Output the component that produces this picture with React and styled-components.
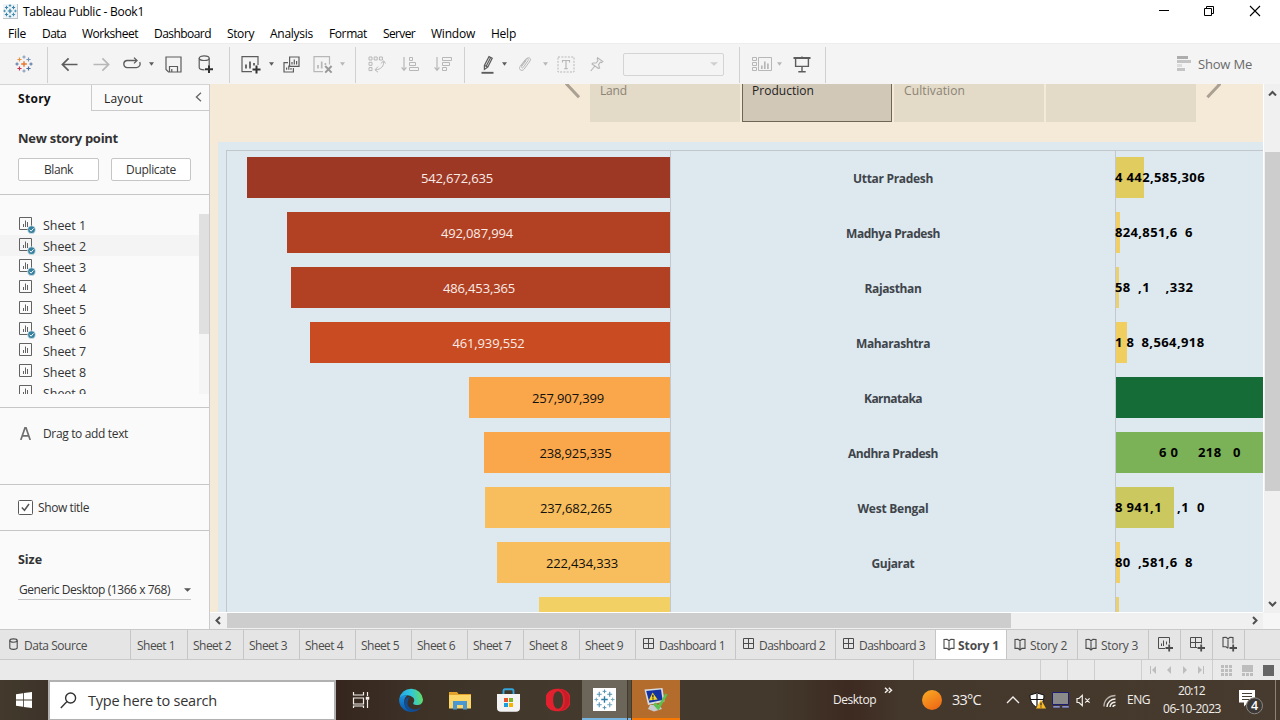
import React, { useLayoutEffect, useRef, useState } from "react";
import styled, { createGlobalStyle } from "styled-components";

const Global = createGlobalStyle`
  *, *::before, *::after { box-sizing: border-box; }
  html, body { margin: 0; padding: 0; overflow: hidden; }
  body { font-family: "Open Sans", "Noto Sans", sans-serif; font-size: 12px; color: #1a1a1a; }
  svg { display: block; flex: none; }
`;

/* ---------- text whose tracking is fitted to a given width ---------- */
const FitBox = styled.span`
  display: block;
  flex: none;
  white-space: nowrap;
  width: ${(p) => p.$w}px;
  font-size: ${(p) => p.$size || 12}px;
  font-weight: ${(p) => p.$weight || 400};
  color: ${(p) => p.$color || "inherit"};
  line-height: 16px;
`;
function Fit({ w, size, weight, color, children, className }) {
  const ref = useRef(null);
  const [tracking, setTracking] = useState(0);
  useLayoutEffect(() => {
    const natural = ref.current.getBoundingClientRect().width;
    setTracking((w - natural) / String(children).length);
  }, [w, children]);
  return (
    <FitBox className={className} $w={w} $size={size} $weight={weight} $color={color}>
      <span ref={ref} style={{ letterSpacing: tracking }}>{children}</span>
    </FitBox>
  );
}

/* ---------- window frame ---------- */
const Window = styled.div`
  width: 1280px;
  height: 720px;
  display: flex;
  flex-direction: column;
  background: #fff;
  overflow: hidden;
`;
const TitleBar = styled.header`
  height: 24px;
  flex: none;
  display: flex;
  align-items: center;
  padding-left: 3px;
`;
const AppMark = styled.div`
  width: 15px;
  height: 15px;
  margin-top: -1px;
  background: #eef4f7;
  border-right: 1px solid #b9c3c8;
  border-bottom: 1px solid #b9c3c8;
`;
const Caption = styled(Fit)`margin-left: 5px;`;
const WindowButtons = styled.div`
  margin: -3px 19px 0 auto;
  display: flex;
  gap: 34px;
`;
const MenuBar = styled.nav`
  height: 19px;
  flex: none;
  display: flex;
  gap: 16px;
  padding: 2px 0 0 8px;
  color: #000;
`;
const Toolbar = styled.div`
  height: 41px;
  flex: none;
  display: flex;
  align-items: center;
  background: #f4f4f4;
  border-top: 1px solid #ededed;
`;
const Tool = styled.div`
  flex: none;
  width: ${(p) => p.$w}px;
  display: flex;
  justify-content: center;
  color: ${(p) => (p.$off ? "#b7b7b7" : "#5c5c5c")};
`;
const PenTools = styled.div`
  flex: none;
  width: 84px;
  padding-left: 16px;
  display: flex;
  align-items: center;
  color: #5c5c5c;
`;
const PenMenu = styled.div`
  display: flex;
  align-items: center;
  gap: 11px;
  margin-left: 8px;
`;
const DimTool = styled.div`color: #b7b7b7;`;
const CardTools = styled.div`
  flex: none;
  width: 41px;
  padding-left: 12px;
  display: flex;
  align-items: center;
  gap: 5px;
  color: #b7b7b7;
`;
const Rule = styled.div`
  flex: none;
  width: 1px;
  height: 36px;
  margin-top: 2px;
  margin-left: ${(p) => p.$before || 0}px;
  background: #d0d0d0;
`;
const Combo = styled.div`
  flex: none;
  width: 101px;
  height: 23px;
  margin-left: 13px;
  margin-right: 15px;
  border: 1px solid #d4d4d4;
  border-radius: 2px;
  display: flex;
  align-items: center;
  justify-content: flex-end;
  padding-right: 5px;
  color: #cfcfcf;
`;
const ShowMe = styled.div`
  margin: 0 28px 0 auto;
  display: flex;
  align-items: center;
  gap: 6px;
`;
const Workspace = styled.div`
  height: 545px;
  flex: none;
  display: flex;
`;

/* ---------- side pane ---------- */
const Side = styled.aside`
  width: 210px;
  flex: none;
  background: #fafafa;
  border-top: 1px solid #d4d4d4;
  border-right: 1px solid #cbcbcb;
  display: flex;
  flex-direction: column;
`;
const SideTabs = styled.div`
  height: 26px;
  flex: none;
  display: flex;
`;
const SideTab = styled.div`
  display: flex;
  align-items: center;
  ${(p) =>
    p.$active
      ? "width: 91px; padding-left: 18px; padding-top: 2px;"
      : "flex: 1; padding-left: 12px; padding-right: 7px; justify-content: space-between; border-left: 1px solid #cbcbcb; border-bottom: 1px solid #cbcbcb; padding-top: 2px;"}
`;
const CollapseMark = styled.svg`margin-top: -4px;`;
const Section = styled.section`
  height: ${(p) => p.$h}px;
  flex: none;
  padding: ${(p) => p.$pad || "0"};
  border-bottom: ${(p) => (p.$last ? "0" : "1px solid #c6c6c6")};
`;
const ButtonRow = styled.div`
  display: flex;
  gap: 12px;
  margin-top: 12px;
`;
const PlainButton = styled.div`
  width: ${(p) => p.$w}px;
  height: 23px;
  border: 1px solid #c6c6c6;
  border-radius: 2px;
  background: #fff;
  display: flex;
  justify-content: center;
  align-items: center;
  padding-top: 1px;
`;
const SheetList = styled.div`
  height: 180px;
  display: flex;
  overflow: hidden;
`;
const SheetRows = styled.div`flex: 1;`;
const SheetRow = styled.div`
  height: 21px;
  display: flex;
  align-items: center;
  padding: 2px 0 0 19px;
  gap: 7px;
  background: ${(p) => (p.$hover ? "#f4f4f4" : "transparent")};
`;
const ListTrack = styled.div`
  width: 10px;
  background: #f5f5f5;
`;
const ListThumb = styled.div`
  height: 120px;
  background: #e0e0e0;
`;
const SideLine = styled.div`
  display: flex;
  align-items: center;
  gap: ${(p) => p.$gap}px;
`;
const LowText = styled(Fit)`margin-top: 1px;`;
const SizeSelect = styled.div`
  width: 173px;
  height: 19px;
  margin-top: 13px;
  padding: 0 0 1px 1px;
  display: flex;
  align-items: center;
  justify-content: space-between;
  border-bottom: 1px solid #c6c6c6;
  color: #555;
`;

/* ---------- story canvas ---------- */
const Canvas = styled.main`
  flex: 1;
  display: grid;
  grid-template-columns: 1053px 17px;
  grid-template-rows: 528px 17px;
`;
const View = styled.div`
  background: #f5e9d8;
  overflow: hidden;
  display: flex;
  flex-direction: column;
`;
const Points = styled.div`
  height: 58px;
  flex: none;
  display: flex;
  align-items: flex-start;
  padding-left: 355px;
`;
const Point = styled.div`
  width: 150px;
  height: 38px;
  margin-right: 2px;
  padding: 0 0 0 10px;
  background: ${(p) => (p.$active ? "#d2c8b8" : "#e3dac8")};
  ${(p) => p.$active && "border: 1px solid #6f6658; border-top: 0; padding-left: 9px;"}
`;
const PointText = styled(Fit)`line-height: 13px;`;
const ArrowLeft = styled.svg`margin-right: 9px;`;
const ArrowRight = styled.svg`margin-left: 7px;`;
const Board = styled.div`
  flex: 1;
  margin-left: 8px;
  padding: 8px 0 0 8px;
  background: #dde9ef;
`;
const Chart = styled.div`
  height: 463px;
  display: flex;
  border-left: 1px solid #c2c7cc;
  border-top: 1px solid #c2c7cc;
`;
const Pane = styled.div`
  flex: none;
  width: ${(p) => p.$w}px;
  border-right: ${(p) => (p.$open ? "0" : "1px solid #c4c7cb")};
`;
const Mark = styled.div`
  height: 55px;
  padding-top: 6px;
  display: flex;
  justify-content: ${(p) => p.$align};
`;
const Bar = styled.div`
  height: 41px;
  width: ${(p) => p.$w}px;
  background: ${(p) => p.$fill};
  color: ${(p) => (p.$light ? "#f8ece8" : "#111")};
  display: flex;
  align-items: center;
  justify-content: center;
  padding-right: 3px;
`;
const StateCell = styled.div`
  height: 55px;
  display: flex;
  justify-content: center;
  padding-top: 20px;
`;
const ThinBar = styled.div`
  position: relative;
  height: 41px;
  width: ${(p) => p.$w}px;
  background: ${(p) => p.$fill};
`;
const MarkLabel = styled.div`
  position: absolute;
  left: 0;
  top: 12px;
  display: flex;
  margin-left: ${(p) => p.$start}px;
  color: #000;
`;
const LabelSlot = styled.div`
  flex: none;
  width: ${(p) => p.$w}px;
`;
const VScroll = styled.div`
  background: #f0f0f0;
  border-left: 1px solid #fff;
  display: flex;
  flex-direction: column;
  align-items: center;
  padding: 6px 0 5px;
`;
const VThumb = styled.div`
  width: 15px;
  height: 339px;
  margin-top: 56px;
  margin-bottom: auto;
  background: #cdcdcd;
`;
const HScroll = styled.div`
  background: #f0f0f0;
  border-top: 1px solid #fff;
  display: flex;
  align-items: flex-start;
  padding: 0 4px;
  svg { margin-top: 3px; }
`;
const HThumb = styled.div`
  width: 784px;
  height: 15px;
  margin-left: 4px;
  margin-right: auto;
  background: #cdcdcd;
`;
const Corner = styled.div`
  background: #f6f6f6;
  border-top: 1px solid #f0f0f0;
`;

/* ---------- sheet tabs and status ---------- */
const Tabs = styled.div`
  height: 31px;
  flex: none;
  display: flex;
  background: #e5e5e5;
  border-top: 1px solid #c9c9c9;
  border-bottom: 1px solid #c9c9c9;
`;
const Tab = styled.div`
  flex: none;
  width: ${(p) => p.$w}px;
  padding-left: ${(p) => p.$pad}px;
  border-right: 1px solid #c6c6c6;
  background: ${(p) => (p.$active ? "#fff" : "transparent")};
  color: #4c4c4c;
  display: flex;
  align-items: center;
  gap: ${(p) => p.$gap || 4}px;
  padding-top: 2px;
  svg { margin-top: -3px; }
`;
const Status = styled.div`
  height: 20px;
  flex: none;
  display: flex;
  justify-content: flex-end;
  background: #eaeaea;
`;
const StatusCell = styled.div`
  width: ${(p) => p.$w}px;
  border-left: 1px solid #cecece;
  display: flex;
  align-items: center;
  padding-left: ${(p) => p.$pad || 0}px;
  gap: ${(p) => p.$gap || 0}px;
`;

/* ---------- taskbar ---------- */
const Taskbar = styled.footer`
  height: 40px;
  flex: none;
  display: flex;
  align-items: center;
  color: #f2efec;
  background: linear-gradient(90deg, #433a2d 0, #3d3329 48px, #35251e 336px, #3e3227 420px, #433a2d 560px, #433a2d 770px, #3d2a21 850px, #44372b 900px, #463b2e 1280px);
`;
const Start = styled.div`
  width: 48px;
  display: flex;
  justify-content: center;
`;
const Search = styled.div`
  width: 288px;
  height: 40px;
  background: #fff;
  border: 2px solid #b1b1b1;
  border-bottom-width: 1px;
  display: flex;
  align-items: center;
  padding-left: 10px;
  gap: 11px;
  color: #333;
`;
const AppSlot = styled.div`
  flex: none;
  width: ${(p) => p.$w}px;
  height: 40px;
  display: flex;
  align-items: center;
  justify-content: center;
  background: ${(p) => p.$bg || "transparent"};
  border-bottom: ${(p) => (p.$line ? `2px solid ${p.$line}` : "0")};
`;
const Stack = styled.div`
  width: 3px;
  height: 40px;
  margin: 0 1px 0 1px;
  background: #57503f;
  border-bottom: 2px solid #76b4e2;
`;
const Tray = styled.div`
  flex: 1;
  height: 40px;
  display: flex;
  align-items: center;
  padding-left: 153px;
`;
const TrayItem = styled.div`
  flex: none;
  width: ${(p) => p.$w}px;
  margin-top: ${(p) => p.$dy || 0}px;
`;
const Clock = styled.div`
  width: 76px;
  display: flex;
  flex-direction: column;
  align-items: flex-start;
  gap: 2px;
`;
const ClockTime = styled(Fit)`margin-left: 15px;`;
const Peek = styled.div`
  width: 1px;
  height: 40px;
  background: #8b8378;
`;

/* ---------- icons ---------- */
const Plus = ({ x, y, r, c, s = 1.2 }) => (
  <path d={`M${x - r} ${y}H${x + r}M${x} ${y - r}V${y + r}`} stroke={c} strokeWidth={s} fill="none" />
);
const Sparkle = ({ size = 17, colors, s = 1.2 }) => {
  const [a, b, c, d, e] = colors;
  return (
    <svg width={size} height={size} viewBox="0 0 18 18">
      <Plus x={9} y={9} r={2.8} c={a} s={s + 0.2} />
      <Plus x={9} y={2} r={1.6} c={b} s={s - 0.2} />
      <Plus x={9} y={16} r={1.6} c={b} s={s - 0.2} />
      <Plus x={2} y={9} r={1.6} c={c} s={s - 0.2} />
      <Plus x={16} y={9} r={1.6} c={c} s={s - 0.2} />
      <Plus x={4.5} y={4.5} r={2.1} c={d} s={s} />
      <Plus x={13.5} y={4.5} r={2.1} c={b} s={s} />
      <Plus x={4.5} y={13.5} r={2.1} c={e} s={s} />
      <Plus x={13.5} y={13.5} r={2.1} c={c} s={s} />
    </svg>
  );
};
const blues = ["#2f7da5", "#3d86ab", "#4a90b3", "#3d86ab", "#3d86ab"];
const Svg = ({ w, h, children, sw = 1.2 }) => (
  <svg width={w} height={h} viewBox={`0 0 ${w} ${h}`} fill="none" stroke="currentColor" strokeWidth={sw}>
    {children}
  </svg>
);
const Caret = ({ w = 5 }) => (
  <svg width={w} height={4} viewBox="0 0 6 4" preserveAspectRatio="none" fill="currentColor"><path d="M0 0.3H6L3 3.7Z" /></svg>
);
const BackIcon = () => <Svg w={17} h={15} sw={1.7}><path d="M16.5 7.5H1.6M7.6 1.3L1.4 7.5L7.6 13.7" /></Svg>;
const ForwardIcon = () => <Svg w={17} h={15} sw={1.7}><path d="M.5 7.5H15.4M9.4 1.3L15.6 7.5L9.4 13.7" /></Svg>;
const LoopIcon = () => (
  <Svg w={19} h={14} sw={1.3}><path d="M14 3.5H4.8A3.6 3.6 0 0 0 4.8 10.6H14.5A3.6 3.6 0 0 0 17.6 5.2" /><path d="M12 .6L15 3.5L12 6.4" /></Svg>
);
const SaveIcon = () => (
  <Svg w={17} h={17}><path d="M1 1H16V16H3.5L1 13.5Z" /><path d="M4.5 16V10.5H12.5V16M6.8 16V13" /></Svg>
);
const DbPlusIcon = () => (
  <Svg w={16} h={18}>
    <ellipse cx="6.2" cy="3.2" rx="5" ry="2.3" /><path d="M1.2 3.2V12.5C1.2 14 3.4 14.8 6.5 14.8M11.2 3.2V10" />
    <path d="M7 14.2H15M11 10.2V18" strokeWidth="2" stroke="#333" />
  </Svg>
);
const ChartPlusIcon = () => (
  <Svg w={20} h={19}>
    <path d="M17 10V1.6H1V16.6H11" /><path d="M5 13.5V9.5M9 13.5V6.5M13 10.5V8" strokeWidth="1.8" />
    <path d="M11.5 14.5H19.5M15.5 10.5V18.5" strokeWidth="2" stroke="#333" />
  </Svg>
);
const DuplicateIcon = () => (
  <Svg w={17} h={17}>
    <path d="M6.6 1H16V10.4H6.6ZM5 6.6H1V16H10.4V12" /><path d="M9 8.6V6M11.3 8.6V3.5M13.6 8.6V5M3.6 13.8V11.5M5.8 13.8V9.5M8 13.8V12" />
  </Svg>
);
const ChartClearIcon = () => (
  <Svg w={20} h={19}>
    <path d="M16.5 9.5V1.6H1V16.6H10" /><path d="M5 13.5V10M8.7 13.5V6.5M12.4 10V8" strokeWidth="1.7" />
    <path d="M12.2 11L18.6 17.6M18.6 11L12.2 17.6" strokeWidth="2" stroke="#999" />
  </Svg>
);
const SwapIcon = () => (
  <Svg w={18} h={18} sw={1}>
    <path d="M1 2H4V5H1ZM6.2 2H9.2V5H6.2ZM11.4 2H14.4V5H11.4ZM1 7.3H4V10.3H1ZM1 12.6H4V15.6H1Z" />
    <path d="M15.7 6.5C16 11 13 14.5 7.5 14.8M12.8 8.5L15.7 5.8L17.6 8.5M10 11.6L7 14.8L10 17.2" />
  </Svg>
);
const SortUpIcon = () => (
  <Svg w={18} h={16}><path d="M3 1V14M.6 11.4L3 14.4L5.4 11.4" /><path d="M8.5 1.5H11.5V4.5H8.5ZM8.5 6.5H14.5V9.5H8.5ZM8.5 11.5H17.5V14.5H8.5Z" strokeWidth="1" /></Svg>
);
const SortDownIcon = () => (
  <Svg w={18} h={16}><path d="M3 1V14M.6 11.4L3 14.4L5.4 11.4" /><path d="M8.5 1.5H17.5V4.5H8.5ZM8.5 6.5H15.5V9.5H8.5ZM8.5 11.5H12.5V14.5H8.5Z" strokeWidth="1" /></Svg>
);
const PenIcon = () => (
  <Svg w={13} h={19} sw={1.2}><path d="M8 1.6L11.2 3.2L6.8 12L3.4 14.4L3.4 10.4ZM3.4 10.4L6.8 12M9.4 3L5.4 10.8" /><path d="M.5 17.8H12.5" strokeWidth="1.9" /></Svg>
);
const ClipIcon = () => (
  <Svg w={14} h={16} sw={1}><path d="M3 10L8.5 3C10.4 .6 13.6 2 12 5L6.2 13C4 16 .2 13.6 2 10.6L7.5 3.4C9 1.4 11 2.6 10 4.6L5.3 11.4C4.4 12.6 3 11.6 3.8 10.2L8.2 4.6" /></Svg>
);
const TextIcon = () => (
  <Svg w={18} h={17} sw={1}><rect x="1" y="1" width="16" height="15" strokeDasharray="2 1.3" /><path d="M5.5 6.5V4.5H12.5V6.5M9 4.5V12.5M7.3 12.6H10.7" strokeWidth="1.2" /></Svg>
);
const PinIcon = () => (
  <Svg w={14} h={15} sw={1.1}><path d="M7.5 .8L12.8 4.6L11.4 5.6L10.3 5.2L8.6 7.7L9.6 11L8.2 11.3L2 7L3 6L6.2 6L8 3.6L7.2 2.2ZM4.8 9L.8 14" /></Svg>
);
const CardsIcon = () => (
  <Svg w={20} h={15} sw={1}><path d="M.5 .5H4.5V3.5H.5ZM.5 5.5H4.5V8.5H.5ZM.5 10.5H4.5V13.5H.5ZM6.5 .5H19.5V13.5H6.5Z" /><path d="M9.8 12V8.6M12.8 12V4.6M15.9 12V6.6" strokeWidth="1.7" /></Svg>
);
const PresentIcon = () => (
  <Svg w={18} h={17} sw={1.4}><path d="M2.6 2V10.4H15.4V2M9 10.4V15.6M5.3 15.8H12.7M9 .5V2" /><path d="M.5 2H17.5" strokeWidth="2" /></Svg>
);
const ShowMeIcon = () => (
  <svg width="15" height="16" viewBox="0 0 15 16" fill="#c4c4c4"><path d="M0 0H11V3H0Z" fill="#adadad" /><path d="M0 4H14V7H0ZM0 12H8V15H0Z" /><path d="M0 8H5V11H0Z" fill="#dcdcdc" /></svg>
);
const SheetIcon = ({ used }) => (
  <svg width="17" height="17" viewBox="0 0 17 17" fill="none" stroke="#626262">
    <path d="M.5 .5H12.5V12.5H.5Z" /><path d="M4.5 10V7M6.5 10V3.5M8.5 10V5" />
    {used && <g><circle cx="12.5" cy="12.7" r="3.9" fill="#36809f" stroke="#fafafa" strokeWidth=".6" /><path d="M10.6 12.7L12.1 14.2L14.5 11.4" stroke="#fff" /></g>}
  </svg>
);
const Chevron = ({ d, w = 9, h = 9, c = "#505050" }) => (
  <svg width={w} height={h} viewBox={`0 0 ${w} ${h}`} fill="none" stroke={c} strokeWidth="2"><path d={d} /></svg>
);
const GridIcon = () => <Svg w={12} h={12} sw={1}><path d="M.5 .5H10.5V10.5H.5ZM5.5 .5V10.5M.5 5.5H10.5" /></Svg>;
const BookIcon = () => <Svg w={12} h={13} sw={1.1}><path d="M1 1.5L4 1.2L6 2.8L8 1.2L11 1.5V10.4H8L6 12L4 10.4H1ZM6 2.8V12" /></Svg>;
const CylinderIcon = () => <Svg w={9} h={12} sw={1.1}><ellipse cx="4.5" cy="2.6" rx="3.7" ry="1.7" /><path d="M.8 2.6V9.8C.8 11.9 8.2 11.9 8.2 9.8V2.6" /></Svg>;
const addMark = <path d="M7.5 12H15M11.2 8.4V15.6" strokeWidth="1.8" />;
const AddSheetIcon = () => <Svg w={15} h={17} sw={1}><path d="M11.5 7.5V1.5H.5V12.5H7M3.5 10V7.5M5.5 10V4.5M8.5 8.5V5.5" />{addMark}</Svg>;
const AddBoardIcon = () => <Svg w={15} h={17} sw={1}><path d="M11.5 7.5V1.5H.5V11.5H7M5.5 1.5V11.5M.5 6.5H11.5" />{addMark}</Svg>;
const AddStoryIcon = () => <Svg w={15} h={17} sw={1.1}><path d="M11 7.5V1.6L8 1.3L6 2.8L4 1.3L1 1.6V10.8H4L6 12.3M6 2.8V12.3" />{addMark}</Svg>;

const EdgeIcon = () => (
  <svg width="24" height="24" viewBox="0 0 24 24">
    <defs>
      <linearGradient id="eg" x1="0" x2="1" y1=".4" y2=".3"><stop offset="0" stopColor="#22a5e4" /><stop offset=".5" stopColor="#2fc6dc" /><stop offset="1" stopColor="#67dd5b" /></linearGradient>
      <linearGradient id="eb" x1="0" x2="0" y1="0" y2="1"><stop offset="0" stopColor="#1b93de" /><stop offset="1" stopColor="#0b56a8" /></linearGradient>
    </defs>
    <path d="M.2 11A12 12 0 0 1 24 11.4C24 15.5 20.7 17.3 17.4 17.1C14.6 17 13.7 15.7 14.5 14.5C16.7 11.4 14 7.9 9.5 7.4C5.5 7 1.5 9 .2 11Z" fill="url(#eg)" />
    <path d="M.1 12C.3 8.5 4.5 6.6 8.5 7.3C6 9 4.5 12.5 5.5 16C6.6 20 10 23 14.5 23.7A12 12 0 0 1 .1 12Z" fill="url(#eb)" />
    <path d="M9.3 12.5C7.3 16 9.5 20.3 13.8 21.2C17 22 20 20.8 22.2 18.4C20.5 22 16.5 24.2 12.3 24C6.5 22 4.4 17.5 5.7 13C6.3 10.5 8.5 8.7 11 9C9.5 10 9 11.5 9.3 12.5Z" fill="#124c91" />
  </svg>
);
const FolderIcon = () => (
  <svg width="22" height="19" viewBox="0 0 22 19"><path d="M0 1H8L9.5 3H22V17H0Z" fill="#e4a22b" /><path d="M0 4H22V17.5H0Z" fill="#fcd669" /><path d="M4 18.6V10H18V18.6H14V14H8V18.6Z" fill="#4a98cf" /></svg>
);
const StoreIcon = () => (
  <svg width="23" height="24" viewBox="0 0 23 24"><path d="M6.5 6V3Q6.5 1.3 8 1.3H15Q16.5 1.3 16.5 3V6" fill="none" stroke="#34a5dd" strokeWidth="1.9" /><path d="M0 6H23V20Q23 23.8 19 23.8H4Q0 23.8 0 20Z" fill="#f3f3f3" /><path d="M7 10H11V14H7Z" fill="#e9532b" /><path d="M12 10H16V14H12Z" fill="#7db42c" /><path d="M7 15H11V19H7Z" fill="#1c9de0" /><path d="M12 15H16V19H12Z" fill="#f6b400" /></svg>
);
const OperaIcon = () => (
  <svg width="24" height="24" viewBox="0 0 24 24"><path fillRule="evenodd" fill="#e3202d" d="M12 .8A11.4 11.3 0 1 0 12 23.2A11.4 11.3 0 1 0 12 .8ZM12 3.2C15 3.2 17 7 17 12S15 20.8 12 20.8S7.2 17 7.2 12S9 3.2 12 3.2Z" /><path d="M12 .8C16 .8 23.4 4 23.4 12S16 23.2 12 23.2C17.5 22 19 17 19 12S17 2.5 12 .8Z" fill="#b31724" opacity=".55" /></svg>
);
const TableauTile = styled.div`
  width: 23px;
  height: 23px;
  display: flex;
  align-items: center;
  justify-content: center;
  background: #fff;
`;
const MonitorCheckIcon = () => (
  <svg width="24" height="25" viewBox="0 0 24 25"><path d="M6 18H15L18 22L10 24.5L4 22Z" fill="#c7cbd0" /><path d="M.5 2.5L18.5 1L20.5 14.5L4 18Z" fill="#d8dce0" /><path d="M2.2 4L17 2.6L18.6 13L5.4 15.8Z" fill="#1532a3" /><path d="M8.6 5.5L13.6 12.6L4.8 13.4Z" fill="#f5d52a" /><path d="M8.9 7.8V10.6M9 11.3V12.4" stroke="#222" strokeWidth="1.3" /><path d="M9 17.5L11.8 15.5L14.2 18.5L21.5 6.5L23.6 7.6L14.5 23.5Z" fill="#58c34e" /></svg>
);
const TaskViewIcon = () => <Svg w={18} h={18} sw={1.2}><path d="M1.5 1V4H11.5V1M1.5 7H11.5V13H1.5ZM1.5 17V15H11.5V17M15.5 1V5M15.5 9V17" /><path d="M14 6H17V8.5H14Z" fill="currentColor" strokeWidth=".5" /></Svg>;
const ShieldIcon = () => (
  <svg width="17" height="17" viewBox="0 0 17 17"><path d="M8 1L15 3C15 9 13 13 8 15.5C3 13 1 9 1 3Z" fill="#fff" stroke="#111" /><path d="M8 2V15M2 7.5H14" stroke="#111" strokeWidth="1.2" /><path d="M12 7.5L17 16.5H7Z" fill="#f9ba25" /><path d="M12 10.5V13.5M12 14.4V15.6" stroke="#222" strokeWidth="1.2" /></svg>
);
const PcIcon = () => <svg width="18" height="17" viewBox="0 0 18 17"><path d="M.5 .5H16.5V12.5H.5Z" fill="#8a8a8a" stroke="#1d1d72" strokeWidth="1" /><path d="M1 14H8V15.8H1ZM10 14H17V15.8H10Z" fill="#aab6e0" stroke="#28286b" strokeWidth=".5" /></svg>;
const MuteIcon = () => <Svg w={16} h={13} sw={1.2}><path d="M1 4.5H3L6.3 1.4V11.6L3 8.5H1ZM9.2 4.3L13.6 8.7M13.6 4.3L9.2 8.7" /></Svg>;
const WifiIcon = () => <Svg w={14} h={14} sw={1.4}><path d="M1 12.5C1 6 6 1.5 12.5 1.5" opacity=".65" /><path d="M4 13C4.2 8.4 8 5 12.5 5M7 13C7.3 10.2 9.6 8.2 12.5 8.2M10 13C10 12 11 11.3 12.5 11.3" /></Svg>;
const NoticeIcon = () => (
  <svg width="24" height="26" viewBox="0 0 24 26"><path d="M0 1H16V13.5H9L5 17.5V13.5H0Z" fill="#fff" /><path d="M3 4.5H13M3 7.5H13M3 10.5H10" stroke="#4a4032" /><circle cx="15.5" cy="16.8" r="8" fill="#3b3835" stroke="#8d8984" /><text x="15.5" y="21.2" textAnchor="middle" fontSize="12.5" fontWeight="600" fill="#fff" fontFamily="Open Sans">4</text></svg>
);

/* ---------- data ---------- */
const menus = [["File", 18], ["Data", 24], ["Worksheet", 56], ["Dashboard", 57], ["Story", 27], ["Analysis", 43], ["Format", 38], ["Server", 32], ["Window", 44], ["Help", 25]];
const usedSheets = [1, 2, 3, 6];
const amounts = [
  ["542,672,635", 423, "#9d3825", true], ["492,087,994", 383, "#b14122", true], ["486,453,365", 379, "#b14122", true],
  ["461,939,552", 360, "#c84b22", true], ["257,907,399", 201, "#faa64a"], ["238,925,335", 186, "#faa64a"],
  ["237,682,265", 185, "#f8bd5c"], ["222,434,333", 173, "#f8bd5c"], ["", 131, "#f3d064"],
];
const states = [["Uttar Pradesh", 80], ["Madhya Pradesh", 94], ["Rajasthan", 57], ["Maharashtra", 74], ["Karnataka", 58], ["Andhra Pradesh", 90], ["West Bengal", 71], ["Gujarat", 43]];
/* bar width, fill, label start, then [text, text width, distance to the next piece] */
const outputs = [
  [28, "#e1cc60", -1, [["4", 8, 11.5], ["442,585,306", 78.5, 79]]],
  [4, "#f0cf66", -1, [["824,851,6", 62.5, 70], ["6", 8, 8]]],
  [3, "#e9d072", -1, [["58", 15.5, 23], [",1", 12, 27.5], [",332", 28, 28]]],
  [11, "#f0cf60", -1, [["1", 8, 11.5], ["8", 8, 15], ["8,564,918", 63, 63]]],
  [147, "#156c37", 0, []],
  [147, "#7bb257", 43, [["6", 8, 11.5], ["0", 8, 27.5], ["218", 23.5, 35], ["0", 8, 8]]],
  [58, "#cac85e", -1, [["8", 8, 11.5], ["941,1", 35.5, 50.5], [",1", 12, 20], ["0", 8, 8]]],
  [4, "#f0cf66", -1, [["80", 15.5, 23], [",581,6", 39.5, 47], ["8", 8, 8]]],
  [3, "#e9d072", 0, []],
];

export default function App() {
  return (
    <Window>
      <Global />
      <TitleBar>
        <AppMark><Sparkle size={14} colors={blues} s={1.4} /></AppMark>
        <Caption w={121} color="#000">Tableau Public - Book1</Caption>
        <WindowButtons>
          <Svg w={12} h={12} sw={1}><path d="M2 5.5H12" stroke="#000" /></Svg>
          <Svg w={12} h={12} sw={1}><path d="M1.5 3.5H8.5V10.5H1.5ZM3.5 3.5V1.5H10.5V8.5H8.5" stroke="#000" /></Svg>
          <Svg w={12} h={12} sw={1.1}><path d="M1 1L11 11M11 1L1 11" stroke="#000" /></Svg>
        </WindowButtons>
      </TitleBar>
      <MenuBar>{menus.map(([t, w]) => <Fit key={t} w={w}>{t}</Fit>)}</MenuBar>
      <Toolbar>
        <Tool $w={47}><Sparkle size={18} colors={["#e8762c", "#7b94b5", "#4e6f9c", "#eb9240", "#c9334f"]} /></Tool>
        <Rule />
        <Tool $w={43}><BackIcon /></Tool>
        <Tool $w={21} $off><ForwardIcon /></Tool>
        <Tool $w={39}><LoopIcon /></Tool>
        <Tool $w={1}><Caret /></Tool>
        <Tool $w={43}><SaveIcon /></Tool>
        <Tool $w={22}><DbPlusIcon /></Tool>
        <Rule $before={12} />
        <Tool $w={41}><ChartPlusIcon /></Tool>
        <Tool $w={0}><Caret /></Tool>
        <Tool $w={41}><DuplicateIcon /></Tool>
        <Tool $w={21} $off><ChartClearIcon /></Tool>
        <Tool $w={18} $off><Caret /></Tool>
        <Rule $before={4} />
        <Tool $w={42} $off><SwapIcon /></Tool>
        <Tool $w={23} $off><SortUpIcon /></Tool>
        <Tool $w={43} $off><SortDownIcon /></Tool>
        <Rule />
        <PenTools>
          <PenIcon />
          <PenMenu>
            <Caret />
            <DimTool><ClipIcon /></DimTool>
            <DimTool><Caret /></DimTool>
          </PenMenu>
        </PenTools>
        <Tool $w={34} $off><TextIcon /></Tool>
        <Tool $w={27} $off><PinIcon /></Tool>
        <Combo><Caret w={8} /></Combo>
        <Rule />
        <CardTools>
          <CardsIcon />
          <Caret />
        </CardTools>
        <Tool $w={41}><PresentIcon /></Tool>
        <Rule $before={3} />
        <ShowMe><ShowMeIcon /><Fit w={54} size={13} color="#6a6a6a">Show Me</Fit></ShowMe>
      </Toolbar>
      <Workspace>
        <Side>
          <SideTabs>
            <SideTab $active><Fit w={33} weight={700} color="#111">Story</Fit></SideTab>
            <SideTab>
              <Fit w={39} color="#222">Layout</Fit>
              <CollapseMark width="7" height="10" viewBox="0 0 7 10" fill="none" stroke="#666" strokeWidth="1.3"><path d="M6 .8L1.4 5L6 9.2" /></CollapseMark>
            </SideTab>
          </SideTabs>
          <Section $h={84} $pad="19px 0 0 18px">
            <Fit w={100} size={13} weight={700} color="#333">New story point</Fit>
            <ButtonRow>
              <PlainButton $w={81}><Fit w={29} color="#333">Blank</Fit></PlainButton>
              <PlainButton $w={80}><Fit w={50} color="#333">Duplicate</Fit></PlainButton>
            </ButtonRow>
          </Section>
          <Section $h={213} $pad="19px 0 0 0">
            <SheetList>
              <SheetRows>
                {[1, 2, 3, 4, 5, 6, 7, 8, 9].map((n) => (
                  <SheetRow key={n} $hover={n === 2}>
                    <SheetIcon used={usedSheets.includes(n)} />
                    <Fit w={43} size={12.5} color="#333">{`Sheet ${n}`}</Fit>
                  </SheetRow>
                ))}
              </SheetRows>
              <ListTrack><ListThumb /></ListTrack>
            </SheetList>
          </Section>
          <Section $h={77} $pad="17px 0 0 20px">
            <SideLine $gap={12}><Svg w={11} h={13} sw={1.7}><path d="M.8 13L5 .8H6L10.2 13M2.3 8.8H8.7" stroke="#6e6e6e" /></Svg><LowText w={85} color="#333">Drag to add text</LowText></SideLine>
          </Section>
          <Section $h={46} $pad="14px 0 0 18px">
            <SideLine $gap={5}>
              <Svg w={15} h={16} sw={1}><rect x=".5" y=".5" width="14" height="14" rx="1" stroke="#5a5a5a" fill="#fff" /><path d="M3.8 7.5L6.5 10.3L11 4" stroke="#555" strokeWidth="1.5" /></Svg>
              <LowText w={51} color="#333">Show title</LowText>
            </SideLine>
          </Section>
          <Section $h={98} $last $pad="21px 0 0 18px">
            <Fit w={24} size={12.5} weight={700} color="#333">Size</Fit>
            <SizeSelect><Fit w={151} color="#333">Generic Desktop (1366 x 768)</Fit><Caret w={7} /></SizeSelect>
          </Section>
        </Side>
        <Canvas>
          <View>
            <Points>
              <ArrowLeft width="16" height="16" viewBox="0 0 16 16" fill="none" stroke="#aaa093" strokeWidth="3"><path d="M3.6 -2L1.8 .3L14 13.3" /></ArrowLeft>
              <Point><PointText w={27} color="#8a8374">Land</PointText></Point>
              <Point $active><PointText w={62} color="#222">Production</PointText></Point>
              <Point><PointText w={61} color="#8a8374">Cultivation</PointText></Point>
              <Point />
              <ArrowRight width="16" height="16" viewBox="0 0 16 16" fill="none" stroke="#aaa093" strokeWidth="3"><path d="M12.6 -2L14.4 .6L2.4 13.3" /></ArrowRight>
            </Points>
            <Board>
              <Chart>
                <Pane $w={444}>
                  {amounts.map(([t, w, fill, light], i) => (
                    <Mark key={i} $align="flex-end">
                      <Bar $w={w} $fill={fill} $light={light}>{t && <Fit w={72} size={13}>{t}</Fit>}</Bar>
                    </Mark>
                  ))}
                </Pane>
                <Pane $w={445}>
                  {states.map(([t, w]) => <StateCell key={t}><Fit w={w} weight={700} color="#40444a">{t}</Fit></StateCell>)}
                </Pane>
                <Pane $w={147} $open>
                  {outputs.map(([w, fill, start, parts], i) => (
                    <Mark key={i} $align="flex-start">
                      <ThinBar $w={w} $fill={fill}>
                        <MarkLabel $start={start}>
                          {parts.map(([t, tw, step], k) => <LabelSlot key={k} $w={step}><Fit w={tw} size={13} weight={700}>{t}</Fit></LabelSlot>)}
                        </MarkLabel>
                      </ThinBar>
                    </Mark>
                  ))}
                </Pane>
              </Chart>
            </Board>
          </View>
          <VScroll><Chevron d="M1 5.5L4.5 2L8 5.5" h={6} /><VThumb /><Chevron d="M1 1L4.5 4.5L8 1" h={6} /></VScroll>
          <HScroll><Chevron d="M6 1L2.5 4.5L6 8" /><HThumb /><Chevron d="M3 1L6.5 4.5L3 8" /></HScroll>
          <Corner />
        </Canvas>
      </Workspace>
      <Tabs>
        <Tab $w={131} $pad={9} $gap={6}><CylinderIcon /><Fit w={63}>Data Source</Fit></Tab>
        {[1, 2, 3, 4, 5, 6, 7, 8, 9].map((n) => <Tab key={n} $w={n === 1 ? 57 : 56} $pad={n === 1 ? 6 : 5}><Fit w={38}>{`Sheet ${n}`}</Fit></Tab>)}
        {[1, 2, 3].map((n) => <Tab key={n} $w={100} $pad={7} $gap={4}><GridIcon /><Fit w={66}>{`Dashboard ${n}`}</Fit></Tab>)}
        {[1, 2, 3].map((n) => <Tab key={n} $w={71} $pad={7} $gap={n === 1 ? 3 : 4} $active={n === 1}><BookIcon /><Fit w={n === 1 ? 41 : 37} weight={n === 1 ? 700 : 400}>{`Story ${n}`}</Fit></Tab>)}
        <Tab $w={32} $pad={9}><AddSheetIcon /></Tab>
        <Tab $w={32} $pad={9}><AddBoardIcon /></Tab>
        <Tab $w={32} $pad={9}><AddStoryIcon /></Tab>
      </Tabs>
      <Status>
        <StatusCell $w={127} /><StatusCell $w={27} /><StatusCell $w={27} /><StatusCell $w={47} />
        <StatusCell $w={71} $pad={8} $gap={10}>
          <svg width="6" height="8" fill="#bdbdbd"><path d="M0 0H1V8H0ZM6 0V8L2 4Z" /></svg>
          <svg width="6" height="8" fill="#bdbdbd"><path d="M5 0V8L1 4Z" /></svg>
          <svg width="6" height="8" fill="#bdbdbd"><path d="M1 0V8L5 4Z" /></svg>
          <svg width="6" height="8" fill="#bdbdbd"><path d="M5 0H6V8H5ZM0 0V8L4 4Z" /></svg>
        </StatusCell>
        <StatusCell $w={68} $pad={8} $gap={10}>
          <svg width="11" height="11" fill="#bdbdbd"><path d="M0 0h3v3H0zM4 0h3v3H4zM8 0h3v3H8zM0 4h3v3H0zM4 4h3v3H4zM8 4h3v3H8zM0 8h3v3H0zM4 8h3v3H4zM8 8h3v3H8z" /></svg>
          <svg width="11" height="11" fill="#bdbdbd"><path d="M0 0h11v7H0zM0 8h3v3H0zM4 8h3v3H4zM8 8h3v3H8z" /></svg>
          <svg width="11" height="11" fill="#666"><path d="M0 0h11v11H0z" /></svg>
        </StatusCell>
      </Status>
      <Taskbar>
        <Start><svg width="16" height="16" viewBox="0 0 16 16" fill="#fff"><path d="M0 2.3L7 1.2V7.6H0ZM7.8 1.1L16 0V7.6H7.8ZM0 8.4H7V14.8L0 13.8ZM7.8 8.4H16V16L7.8 14.9Z" /></svg></Start>
        <Search><Svg w={17} h={17} sw={1.4}><circle cx="10.6" cy="6" r="5" /><path d="M7 9.6L.8 16" /></Svg><Fit w={129} size={14.5}>Type here to search</Fit></Search>
        <AppSlot $w={49}><TaskViewIcon /></AppSlot>
        <AppSlot $w={51}><EdgeIcon /></AppSlot>
        <AppSlot $w={47}><FolderIcon /></AppSlot>
        <AppSlot $w={51}><StoreIcon /></AppSlot>
        <AppSlot $w={48}><OperaIcon /></AppSlot>
        <AppSlot $w={45} $bg="#6c655a" $line="#76b4e2"><TableauTile><Sparkle size={21} colors={["#2e7ca4", "#4f8fb0", "#6fa5c0", "#5b97b6", "#5b97b6"]} s={1} /></TableauTile></AppSlot>
        <Stack />
        <AppSlot $w={48} $bg="#b46c2d" $line="#f77803"><MonitorCheckIcon /></AppSlot>
        <Tray>
          <TrayItem $w={51}><Fit w={43}>Desktop</Fit></TrayItem>
          <TrayItem $w={38} $dy={-20}><Svg w={9} h={7} sw={1.5}><path d="M1 .8L3.7 3.3L1 5.8M4.8 .8L7.5 3.3L4.8 5.8" /></Svg></TrayItem>
          <TrayItem $w={30}>
            <svg width="20" height="20"><defs><linearGradient id="sun" x1="0" x2=".6" y1="0" y2="1"><stop offset="0" stopColor="#f9ad25" /><stop offset="1" stopColor="#ef6c16" /></linearGradient></defs><circle cx="10" cy="10" r="10" fill="url(#sun)" /></svg>
          </TrayItem>
          <TrayItem $w={54}><Fit w={29} size={14.5}>33°C</Fit></TrayItem>
          <TrayItem $w={23}><Svg w={14} h={8} sw={1.3}><path d="M1 7L7 1L13 7" /></Svg></TrayItem>
          <TrayItem $w={23}><ShieldIcon /></TrayItem>
          <TrayItem $w={24}><PcIcon /></TrayItem>
          <TrayItem $w={27}><MuteIcon /></TrayItem>
          <TrayItem $w={24} $dy={2}><WifiIcon /></TrayItem>
          <TrayItem $w={36}><Fit w={23}>ENG</Fit></TrayItem>
          <Clock><ClockTime w={27}>20:12</ClockTime><Fit w={58}>06-10-2023</Fit></Clock>
          <TrayItem $w={36} $dy={4}><NoticeIcon /></TrayItem>
          <Peek />
        </Tray>
      </Taskbar>
    </Window>
  );
}
